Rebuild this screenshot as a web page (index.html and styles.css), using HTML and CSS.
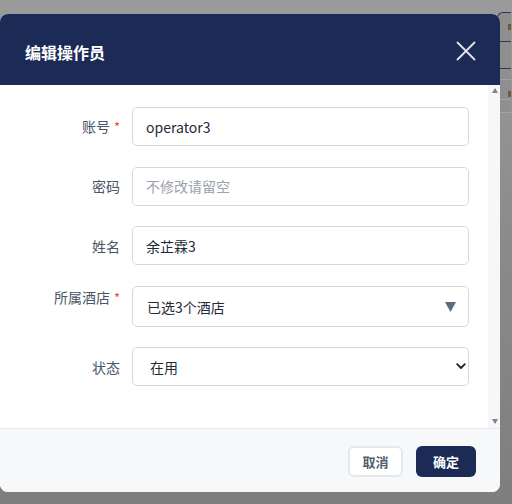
FILE: index.html
```html
<!DOCTYPE html>
<html lang="zh-CN">
<head>
<meta charset="utf-8">
<title>编辑操作员</title>
<link rel="stylesheet" href="styles.css">
</head>
<body>
<div class="backdrop-panel">
  <div class="bp-row bp-dark"><span class="bp-mark"></span></div>
  <div class="bp-row bp-dark bp-h2"></div>
  <div class="bp-row bp-light bp-h3"></div>
  <div class="bp-row bp-light bp-h4"><span class="bp-mark"></span></div>
  <div class="bp-row bp-light bp-h5"></div>
</div>

<div class="modal">
  <div class="modal-header">
    <h2 class="modal-title">编辑操作员</h2>
    <button class="close-btn" aria-label="关闭">
      <svg width="20" height="20" viewBox="0 0 20 20"><path d="M1.5 1.5 L18.5 18.5 M18.5 1.5 L1.5 18.5" stroke="#e2e5ea" stroke-width="1.8" fill="none" stroke-linecap="round"/></svg>
    </button>
  </div>

  <div class="modal-body">
    <form class="form">
      <div class="field">
        <label class="field-label">账号<span class="req">*</span></label>
        <input class="control" type="text" value="operator3">
      </div>
      <div class="field">
        <label class="field-label">密码</label>
        <input class="control" type="password" placeholder="不修改请留空">
      </div>
      <div class="field">
        <label class="field-label">姓名</label>
        <input class="control" type="text" value="余芷霖3">
      </div>
      <div class="field field-top">
        <label class="field-label label-top">所属酒店<span class="req">*</span></label>
        <div class="control multi">
          <span>已选3个酒店</span>
          <svg class="caret" width="11" height="10" viewBox="0 0 11 10"><path d="M0 0 H11 L5.5 10 Z" fill="#5b6b7f"/></svg>
        </div>
      </div>
      <div class="field">
        <label class="field-label">状态</label>
        <div class="select-wrap">
          <select class="control select">
            <option>在用</option>
            <option>停用</option>
          </select>
          <svg class="chevron" width="10" height="7" viewBox="0 0 10 7"><path d="M1.2 1.2 L5 5 L8.8 1.2" stroke="#1f2937" stroke-width="1.9" fill="none" stroke-linecap="round" stroke-linejoin="round"/></svg>
        </div>
      </div>
    </form>
    <div class="scrollbar">
      <svg width="6" height="5" viewBox="0 0 6 5"><path d="M0 5 L3 0 L6 5 Z" fill="#7a818c"/></svg>
      <svg width="6" height="5" viewBox="0 0 6 5"><path d="M0 0 L6 0 L3 5 Z" fill="#7a818c"/></svg>
    </div>
  </div>

  <div class="modal-footer">
    <button class="btn btn-cancel" type="button">取消</button>
    <button class="btn btn-primary" type="button">确定</button>
  </div>
</div>
</body>
</html>
```

FILE: styles.css
```css
html, body {
  margin: 0;
  padding: 0;
}
body {
  width: 512px;
  height: 504px;
  padding-top: 14px;
  box-sizing: border-box;
  position: relative;
  overflow: hidden;
  background: linear-gradient(180deg, #9b9b9b 0%, #8a8a8a 50%, #7e7e7e 100%);
  font-family: "Noto Sans CJK SC", "Noto Sans", sans-serif;
}

/* page behind the overlay, visible at the right edge */
.backdrop-panel {
  position: absolute;
  left: 497px;
  top: 12px;
  width: 13px;
  border-top: 1.5px solid #2c3855;
  border-left: 1.5px solid #2c3855;
  border-top-left-radius: 6px;
  background: #8f8f8f;
}
.bp-row {
  height: 28px;
  position: relative;
}
.bp-dark { border-bottom: 1.5px solid #2c3855; }
.bp-light { border-bottom: 1px solid #a3a3a3; }
.bp-h2 { height: 26px; }
.bp-h3 { height: 10px; }
.bp-h4 { height: 19px; }
.bp-h5 { height: 12px; }
.bp-mark {
  position: absolute;
  left: 10px;
  top: 11px;
  width: 3px;
  height: 6px;
  background: #6e5a3c;
}

.modal {
  position: relative;
  z-index: 1;
  width: 500px;
  height: 478px;
  background: #fff;
  border-radius: 8px;
  overflow: hidden;
  display: flex;
  flex-direction: column;
}

.modal-header {
  height: 71px;
  flex: none;
  background: #1c2b56;
  display: flex;
  align-items: center;
  justify-content: space-between;
  padding: 4px 24px 0 25px;
  box-sizing: border-box;
}
.modal-title {
  margin: 0;
  color: #fff;
  font-size: 16px;
  font-weight: 700;
  line-height: 22px;
}
.close-btn {
  border: 0;
  background: transparent;
  padding: 0;
  width: 20px;
  height: 20px;
  display: flex;
  margin-top: -1px;
}

.modal-body {
  flex: 1;
  display: flex;
  min-height: 0;
}
.form {
  flex: 1;
  padding: 22px 19px 0 0;
}
.field {
  display: flex;
  align-items: center;
  gap: 12px;
  margin-bottom: 20.6px;
}
.field-top {
  align-items: flex-start;
}
.field-label {
  width: 120px;
  flex: none;
  text-align: right;
  font-size: 14px;
  color: #4a5565;
  line-height: 20px;
}
.label-top {
  line-height: 22px;
}
.req {
  color: #ef4444;
  margin-left: 4px;
  font-size: 13px;
}

.control {
  flex: 1;
  height: 39px;
  box-sizing: border-box;
  border: 1px solid #d5d9df;
  border-radius: 5px;
  padding: 0 13px;
  font-family: "Noto Sans CJK SC", "Noto Sans", sans-serif;
  font-size: 14px;
  color: #1f2937;
  background: #fff;
  outline: none;
  margin: 0;
}
.control::placeholder {
  color: #9aa1ab;
}
.multi {
  height: 41px;
  display: flex;
  align-items: center;
  justify-content: space-between;
  padding: 2px 12px 0 14px;
}
.select-wrap {
  flex: 1;
  display: flex;
  position: relative;
}
.select {
  appearance: none;
  -webkit-appearance: none;
  padding-left: 17px;
  width: 100%;
}
.chevron {
  position: absolute;
  right: 3px;
  top: 16px;
  pointer-events: none;
}

.scrollbar {
  width: 12px;
  flex: none;
  background: #f6f7f9;
  display: flex;
  flex-direction: column;
  align-items: center;
  justify-content: space-between;
  padding: 3px 0 4px 1px;
  box-sizing: border-box;
}

.modal-footer {
  height: 64px;
  flex: none;
  box-sizing: border-box;
  border-top: 1px solid #e4e7eb;
  background: #f7f8fa;
  display: flex;
  align-items: center;
  justify-content: flex-end;
  gap: 13px;
  padding: 1px 24px 0 0;
}
.btn {
  height: 31px;
  box-sizing: border-box;
  border-radius: 6px;
  font-family: "Noto Sans CJK SC", "Noto Sans", sans-serif;
  font-size: 13px;
  font-weight: 700;
  line-height: 1;
  cursor: pointer;
  margin: 0;
}
.btn-cancel {
  width: 55px;
  background: #fff;
  border: 2px solid #e6e8ec;
  color: #556070;
  padding: 0;
}
.btn-primary {
  width: 60px;
  background: #1c2b56;
  border: 0;
  color: #fff;
  padding: 0;
}
```
